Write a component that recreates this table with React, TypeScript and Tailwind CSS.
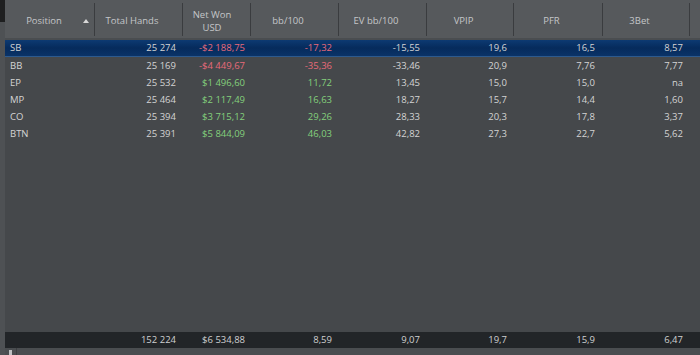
import React from 'react'

type Row = {
    pos: string
    hands: string
    won: string
    bb: string
    ev: string
    vpip: string
    pfr: string
    threeBet: string
    neg?: boolean
}

const rows: Row[] = [
    { pos: 'SB', hands: '25 274', won: '-$2 188,75', bb: '-17,32', ev: '-15,55', vpip: '19,6', pfr: '16,5', threeBet: '8,57', neg: true },
    { pos: 'BB', hands: '25 169', won: '-$4 449,67', bb: '-35,36', ev: '-33,46', vpip: '20,9', pfr: '7,76', threeBet: '7,77', neg: true },
    { pos: 'EP', hands: '25 532', won: '$1 496,60', bb: '11,72', ev: '13,45', vpip: '15,0', pfr: '15,0', threeBet: 'na' },
    { pos: 'MP', hands: '25 464', won: '$2 117,49', bb: '16,63', ev: '18,27', vpip: '15,7', pfr: '14,4', threeBet: '1,60' },
    { pos: 'CO', hands: '25 394', won: '$3 715,12', bb: '29,26', ev: '28,33', vpip: '20,3', pfr: '17,8', threeBet: '3,37' },
    { pos: 'BTN', hands: '25 391', won: '$5 844,09', bb: '46,03', ev: '42,82', vpip: '27,3', pfr: '22,7', threeBet: '5,62' },
]

const cols = 'grid grid-cols-[90px_88px_68px_88px_88px_87px_89px_87px]'

function HeaderCell({ children }: { children: React.ReactNode }) {
    return (
        <div className="relative flex items-center justify-center pr-[14px] pt-[3px] text-center leading-[13px]">
            {children}
            <div className="absolute right-0 top-[3px] bottom-[2px] w-px bg-[#3a3c3f]" />
        </div>
    )
}

export default function App() {
    return (
        <div className="w-[700px] h-[355px] flex bg-[#4a4d50] overflow-hidden text-[9.5px] text-[#d4d4d4]" style={{ fontFamily: '"Open Sans", "Noto Sans", sans-serif' }}>
            <div className="w-[5px] flex flex-col bg-[#4e5154]">
                <div className="h-[22px] bg-[#1e1f20]" />
            </div>
            <div className="flex-1 flex flex-col">
                <div className="h-[40px] bg-[#56595c] flex border-b-2 border-[#4a4d50]">
                    <div className={`${cols} text-[#c4c6c8]`}>
                        <HeaderCell>
                            <span className="ml-[2px]">Position</span>
                            <span className="absolute right-[6px] top-[19px] w-0 h-0 border-l-[3px] border-r-[3px] border-b-[4px] border-l-transparent border-r-transparent border-b-[#d8d8d8]" />
                        </HeaderCell>
                        <HeaderCell>Total Hands</HeaderCell>
                        <HeaderCell><span className="pl-[4px]">Net Won<br />USD</span></HeaderCell>
                        <HeaderCell>bb/100</HeaderCell>
                        <HeaderCell>EV bb/100</HeaderCell>
                        <HeaderCell>VPIP</HeaderCell>
                        <HeaderCell>PFR</HeaderCell>
                        <HeaderCell>3Bet</HeaderCell>
                    </div>
                </div>
                <div className="flex-1 bg-[#45484b]">
                    {rows.map((r, i) => {
                        const selected = i === 0
                        const numColor = r.neg ? 'text-[#e86a7a]' : 'text-[#84d07c]'
                        return (
                            <div
                                key={r.pos}
                                className={`h-[17px] flex items-center ${selected ? 'bg-gradient-to-b from-[#0d3a72] via-[#062b5c] to-[#0a3368] border-b border-[#2d5a8e]' : ''}`}
                            >
                                <div className={`${cols} w-full leading-[16px]`}>
                                    <div className="pl-[5px]">{r.pos}</div>
                                    <div className="text-right pr-[7px]">{r.hands}</div>
                                    <div className={`text-right pr-[6px] ${numColor}`}>{r.won}</div>
                                    <div className={`text-right pr-[7px] ${numColor}`}>{r.bb}</div>
                                    <div className="text-right pr-[7px]">{r.ev}</div>
                                    <div className="text-right pr-[7px]">{r.vpip}</div>
                                    <div className="text-right pr-[8px]">{r.pfr}</div>
                                    <div className="text-right pr-[7px]">{r.threeBet}</div>
                                </div>
                            </div>
                        )
                    })}
                </div>
                <div className="h-[16px] bg-[#222528] flex items-center">
                    <div className={`${cols} leading-[16px] text-[#cfd0d1]`}>
                        <div />
                        <div className="text-right pr-[7px]">152 224</div>
                        <div className="text-right pr-[6px]">$6 534,88</div>
                        <div className="text-right pr-[7px]">8,59</div>
                        <div className="text-right pr-[7px]">9,07</div>
                        <div className="text-right pr-[7px]">19,7</div>
                        <div className="text-right pr-[8px]">15,9</div>
                        <div className="text-right pr-[7px]">6,47</div>
                    </div>
                </div>
                <div className="h-[7px] bg-[#4a4d50] flex">
                    <div className="ml-[4px] mt-[2px] w-[3px] h-[5px] bg-[#bfc1c3]" />
                    <div className="ml-[4px] w-px h-full bg-[#3c3e41]" />
                </div>
            </div>
        </div>
    )
}
